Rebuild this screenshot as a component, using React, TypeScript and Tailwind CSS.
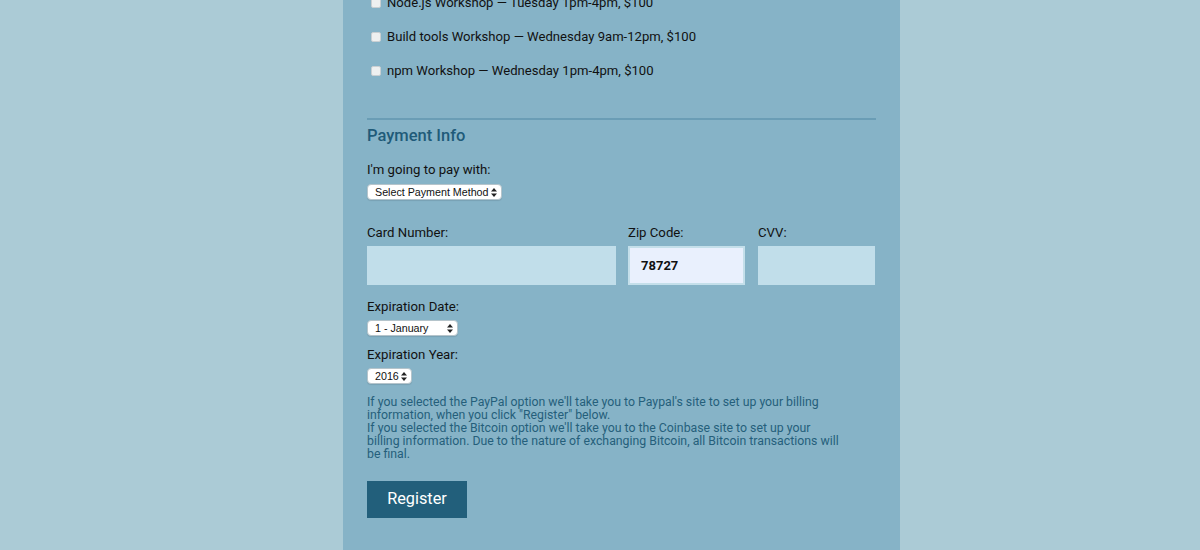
import type { ReactNode } from "react";

const workshops = [
  "Node.js Workshop — Tuesday 1pm-4pm, $100",
  "Build tools Workshop — Wednesday 9am-12pm, $100",
  "npm Workshop — Wednesday 1pm-4pm, $100",
];

// little up/down arrows like the mac native select
const Arrows = () => (
  <svg width="6" height="9" viewBox="0 0 6 9" className="shrink-0">
    <path d="M3 0 L6 3.5 H0 Z" fill="#222" />
    <path d="M3 9 L6 5.5 H0 Z" fill="#222" />
  </svg>
);

const FakeSelect = ({ width, children }: { width: string; children: ReactNode }) => (
  <div
    className={`${width} h-[16px] bg-white border border-[#b5c4cb] rounded-[4px] flex items-center justify-between pl-[7px] pr-[4px] text-[10.7px] leading-none text-[#111] whitespace-nowrap shadow-[0_1px_1px_rgba(0,0,0,0.1)]`}
    style={{ fontFamily: "'Liberation Sans', Arial, sans-serif" }}
  >
    <span>{children}</span>
    <Arrows />
  </div>
);

const Label = ({ children, className = "" }: { children: ReactNode; className?: string }) => (
  <div className={`text-[13.2px] leading-[17px] text-[#111] ${className}`}>{children}</div>
);

const App = () => {
  return (
    <div
      className="h-[550px] overflow-hidden bg-[#abcbd6] flex justify-center"
      style={{ fontFamily: "Roboto, 'Liberation Sans', sans-serif" }}
    >
      <div className="ml-[43px] w-[557px] bg-[#86b3c7] px-6">
        {/* workshops list (scrolled) */}
        <div className="-mt-[14px]">
          {workshops.map((w) => (
            <div key={w} className="h-[34px] flex items-center">
              <span className="ml-[4px] w-[10px] h-[10px] bg-[#eef0f0] border border-[#c9cfd2] rounded-[2px]" />
              <span className="ml-[6px] text-[13.1px] text-[#111]">{w}</span>
            </div>
          ))}
        </div>

        <div className="mt-[30px] h-[2px] bg-[#6a9db5]" />

        <h2 className="mt-[6px] text-[16.5px] leading-[20px] font-medium text-[#1f5b79]">Payment Info</h2>

        <Label className="mt-[15px]">I'm going to pay with:</Label>
        <div className="mt-[6px]">
          <FakeSelect width="w-[135px]">Select Payment Method</FakeSelect>
        </div>

        <div className="mt-[24px] flex gap-[12px]">
          <div className="w-[249px]">
            <Label>Card Number:</Label>
            <div className="mt-[5px] h-[39px] bg-[#c1deea]" />
          </div>
          <div className="w-[117px]">
            <Label>Zip Code:</Label>
            <div className="mt-[5px] h-[39px] bg-[#e9f0fd] border-2 border-[#c4dfea] flex items-center pl-[11px] text-[13px] font-bold text-[#111]">
              78727
            </div>
          </div>
          <div className="w-[117px] ml-[1px]">
            <Label>CVV:</Label>
            <div className="mt-[5px] h-[39px] bg-[#c1deea]" />
          </div>
        </div>

        <Label className="mt-[13px]">Expiration Date:</Label>
        <div className="mt-[5px]">
          <FakeSelect width="w-[91px]">1 - January</FakeSelect>
        </div>

        <Label className="mt-[10px]">Expiration Year:</Label>
        <div className="mt-[5px]">
          <FakeSelect width="w-[45px]">2016</FakeSelect>
        </div>

        <div className="mt-[12px] w-[474px] text-[12.3px] leading-[13px] text-[#255f7b]">
          <p>
            If you selected the PayPal option we'll take you to Paypal's site to set up your billing information,
            when you click "Register" below.
          </p>
          <p>
            If you selected the Bitcoin option we'll take you to the Coinbase site to set up your billing
            information. Due to the nature of exchanging Bitcoin, all Bitcoin transactions will be final.
          </p>
        </div>

        <button className="mt-[20px] w-[100px] h-[37px] bg-[#225f7b] text-white text-[16.3px]">Register</button>
      </div>
    </div>
  );
};

export default App;
